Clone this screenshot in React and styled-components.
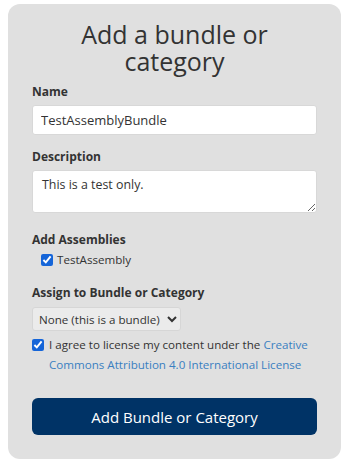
import React from "react";
import styled, { createGlobalStyle } from "styled-components";

const GlobalStyle = createGlobalStyle`
    body {
        margin: 0;
        background: #ffffff;
        font-family: "Open Sans", "Liberation Sans", sans-serif;
        color: #333333;
    }
`;

const Panel = styled.form`
    margin: 4px 6px 5px 8px;
    padding: 17px 24px 24px;
    background-color: #e0e0e0;
    border-radius: 12px;
    display: flex;
    flex-direction: column;
`;

const Title = styled.h1`
    margin: 0 0 9px;
    font-size: 25px;
    line-height: 27px;
    font-weight: 400;
    text-align: center;
    color: #333333;
`;

const Field = styled.div`
    display: flex;
    flex-direction: column;
    margin-bottom: ${(p) => p.$gap || 14}px;
`;

const Label = styled.label`
    font-size: 12px;
    font-weight: 700;
    line-height: 16px;
    margin-bottom: ${(p) => p.$after || 5}px;
    color: #333333;
`;

const TextInput = styled.input`
    box-sizing: border-box;
    height: 30px;
    padding: 4px 8px;
    border: 1px solid #d8d8d8;
    border-radius: 3px;
    background: #ffffff;
    font-family: inherit;
    font-size: 13px;
    color: #333333;
    outline: none;
`;

const TextArea = styled.textarea`
    box-sizing: border-box;
    height: 43px;
    padding: 5px 9px;
    border: 1px solid #d8d8d8;
    border-radius: 3px;
    background: #ffffff;
    font-family: inherit;
    font-size: 12.4px;
    color: #333333;
    outline: none;
`;

const CheckRow = styled.label`
    display: flex;
    align-items: ${(p) => (p.$top ? "flex-start" : "center")};
    gap: ${(p) => p.$spacing || 4}px;
    padding-left: ${(p) => p.$indent || 0}px;
    font-size: 11.6px;
    line-height: ${(p) => (p.$top ? 20 : 16)}px;
    color: #333333;
`;

const Check = styled.input`
    margin: ${(p) => (p.$top ? "4px" : "0")} 0 0;
    width: 12px;
    height: 12px;
    accent-color: #1565d8;
    flex-shrink: 0;
`;

const Select = styled.select`
    align-self: flex-start;
    height: 24px;
    padding: 0 4px 0 2px;
    border: 1px solid #d6d6d6;
    border-radius: 3px;
    background: #ebebeb;
    font-family: inherit;
    font-size: 11.6px;
    color: #333333;
`;

const Link = styled.a`
    color: #3a7fc1;
    text-decoration: none;
`;

const SubmitButton = styled.button`
    margin-top: 23px;
    height: 37px;
    border: none;
    border-radius: 6px;
    background-color: #003366;
    color: #ffffff;
    font-family: inherit;
    font-size: 15px;
    cursor: pointer;
`;

export default function App() {
    return (
        <>
            <GlobalStyle />
            <Panel onSubmit={(e) => e.preventDefault()}>
                <Title>Add a bundle or category</Title>
                <Field>
                    <Label>Name</Label>
                    <TextInput defaultValue="TestAssemblyBundle" />
                </Field>
                <Field $gap={19}>
                    <Label>Description</Label>
                    <TextArea defaultValue="This is a test only." />
                </Field>
                <Field $gap={17}>
                    <Label $after={4}>Add Assemblies</Label>
                    <CheckRow $indent={9}>
                        <Check type="checkbox" defaultChecked />
                        TestAssembly
                    </CheckRow>
                </Field>
                <Field $gap={4}>
                    <Label $after={6}>Assign to Bundle or Category</Label>
                    <Select defaultValue="none">
                        <option value="none">None (this is a bundle)</option>
                    </Select>
                </Field>
                <CheckRow $top $spacing={5}>
                    <Check type="checkbox" defaultChecked $top />
                    <span>
                        I agree to license my content under the{" "}
                        <Link href="#">
                            Creative Commons Attribution 4.0 International
                            License
                        </Link>
                    </span>
                </CheckRow>
                <SubmitButton type="submit">Add Bundle or Category</SubmitButton>
            </Panel>
        </>
    );
}
